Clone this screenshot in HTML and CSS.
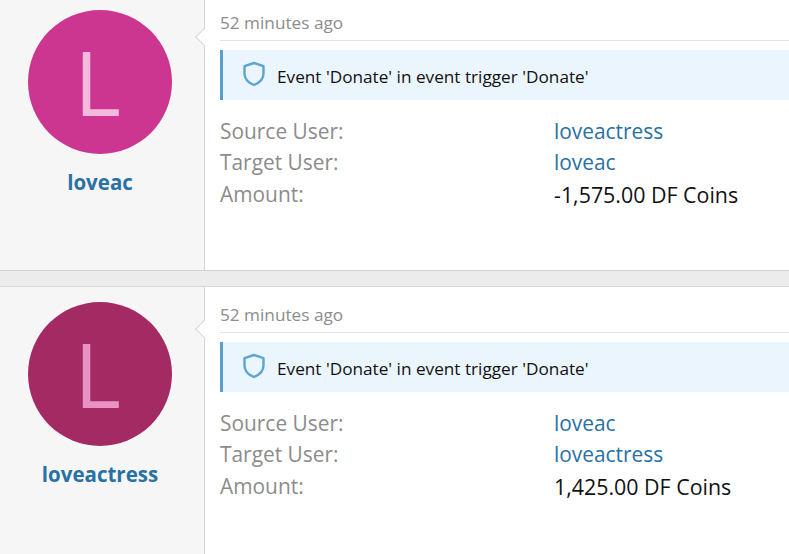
FILE: index.html
```html
<!doctype html>
<html lang='en-US'>
<head>
  <title>Event log</title>
  <meta charset='utf-8'>
  <link rel="stylesheet" href="styles.css">
</head>
<body>
  <article class='post post-first'>
    <aside class='author'>
      <div class='avatar avatar-pink'><span>L</span></div>
      <a class='username' href='#'>loveac</a>
    </aside>
    <section class='content'>
      <span class='arrow'></span>
      <div class='time'>52 minutes ago</div>
      <div class='notice'>
        <svg class='shield' viewBox='0 0 24 26' width='24' height='26'><path d='M12 2 L21.5 5.2 V12.5 C21.5 18 17.5 21.8 12 24 C6.5 21.8 2.5 18 2.5 12.5 V5.2 Z'/></svg>
        <span>Event 'Donate' in event trigger 'Donate'</span>
      </div>
      <dl class='fields'>
        <dt>Source User:</dt><dd><a href='#'>loveactress</a></dd>
        <dt>Target User:</dt><dd><a href='#'>loveac</a></dd>
        <dt>Amount:</dt><dd>-1,575.00 DF Coins</dd>
      </dl>
    </section>
  </article>
  <article class='post'>
    <aside class='author'>
      <div class='avatar avatar-plum'><span>L</span></div>
      <a class='username' href='#'>loveactress</a>
    </aside>
    <section class='content'>
      <span class='arrow'></span>
      <div class='time'>52 minutes ago</div>
      <div class='notice'>
        <svg class='shield' viewBox='0 0 24 26' width='24' height='26'><path d='M12 2 L21.5 5.2 V12.5 C21.5 18 17.5 21.8 12 24 C6.5 21.8 2.5 18 2.5 12.5 V5.2 Z'/></svg>
        <span>Event 'Donate' in event trigger 'Donate'</span>
      </div>
      <dl class='fields'>
        <dt>Source User:</dt><dd><a href='#'>loveac</a></dd>
        <dt>Target User:</dt><dd><a href='#'>loveactress</a></dd>
        <dt>Amount:</dt><dd>1,425.00 DF Coins</dd>
      </dl>
    </section>
  </article>
</body>
</html>
```

FILE: styles.css
```css
*, html { box-sizing: border-box; }
html, body { height: 100%; }
body { margin: 0; background: #ececec; color: #111; font: 16px "Open Sans", "Noto Sans", sans-serif; overflow: hidden; }
a { color: #2a71a3; text-decoration: none; }

.post { display: flex; background: #fff; height: 267px; }
.post-first { height: 271px; border-bottom: 1px solid #d2d2d2; margin-bottom: 15px; }
.post + .post { border-top: 1px solid #d8d8d8; height: 268px; }

.author { width: 205px; flex: none; background: #f6f6f6; border-right: 1px solid #d5d5d5; padding: 10px 0 0 28px; }
.post + .post .author { padding-top: 15px; }
.avatar { width: 144px; height: 144px; border-radius: 50%; display: flex; align-items: center; justify-content: center; font-size: 90px; font-weight: 500; line-height: 1; padding: 0 5px 3px 0; }
.avatar-pink { background: #cc3590; color: #f5b9de; }
.avatar-plum { background: #a32a63; color: #e893c4; }
.username { display: block; width: 144px; margin-top: 14px; text-align: center; font-size: 20.5px; font-weight: 700; white-space: nowrap; }

.content { position: relative; flex: 1; padding: 11px 0 0 15px; min-width: 0; }
.arrow { position: absolute; left: -7px; top: 30px; width: 14px; height: 14px; background: #fff; border-left: 1px solid #d5d5d5; border-bottom: 1px solid #d5d5d5; transform: rotate(45deg); }
.post + .post .arrow { top: 35px; }
.time { color: #8c8c8c; font-size: 17.2px; line-height: 24px; height: 30px; border-bottom: 1px solid #e4e4e4; }
.post + .post .time { margin-top: 5px; }

.notice { display: flex; align-items: center; gap: 11px; height: 50px; margin-top: 9px; padding-left: 19px; background: #ebf5fd; border-left: 3px solid #5a9fc9; font-size: 17.2px; white-space: nowrap; }
.notice span { position: relative; top: 1px; }
.shield { flex: none; margin-top: -2px; }
.shield path { fill: none; stroke: #5aa5d2; stroke-width: 2.4; stroke-linejoin: round; }

.fields { display: grid; grid-template-columns: 334px 1fr; margin: 16px 0 0; font-size: 20.9px; line-height: 31.3px; }
dt, dd { margin: 0; white-space: nowrap; }
dt { color: #8c8c8c; }
dd:last-child { font-size: 21.4px; }
```
